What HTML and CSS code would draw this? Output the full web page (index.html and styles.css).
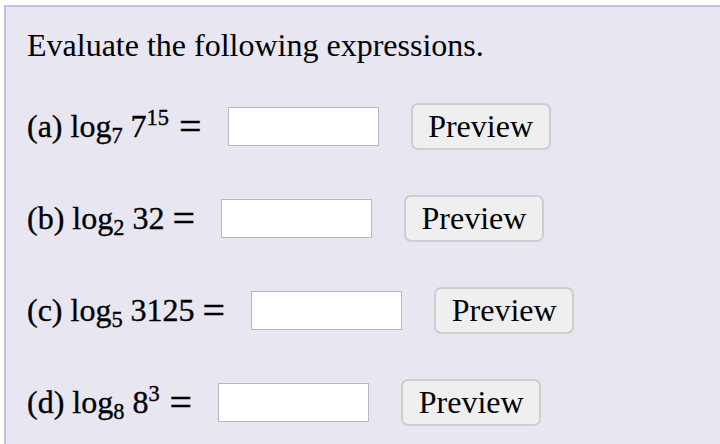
FILE: index.html
```html
<!DOCTYPE html>
<html lang="en">
<head>
    <meta charset="UTF-8">
    <meta name="viewport" content="width=device-width, initial-scale=1.0">
    <title>Logarithms</title>
    <link rel="stylesheet" href="styles.css">
</head>
<body>
    <div class="problem">
        <p class="intro">Evaluate the following expressions.</p>

        <div class="row">
            <span class="expr">(a) log<sub>7</sub> 7<sup>15</sup></span>
            <span class="eq">=</span>
            <input type="text" class="answer">
            <button class="preview">Preview</button>
        </div>
        <div class="row">
            <span class="expr">(b) log<sub>2</sub> 32</span>
            <span class="eq">=</span>
            <input type="text" class="answer">
            <button class="preview">Preview</button>
        </div>
        <div class="row">
            <span class="expr">(c) log<sub>5</sub> 3125</span>
            <span class="eq">=</span>
            <input type="text" class="answer">
            <button class="preview">Preview</button>
        </div>
        <div class="row">
            <span class="expr">(d) log<sub>8</sub> 8<sup>3</sup></span>
            <span class="eq">=</span>
            <input type="text" class="answer">
            <button class="preview">Preview</button>
        </div>
    </div>
</body>
</html>
```

FILE: styles.css
```css
body{
    margin: 0;
    background-color: #fff;
    font-family: "Liberation Serif", "Times New Roman", serif;
    color: #000;
}
.problem{
    margin: 5px 0 0 4px;
    padding: 20px 0 40px 21px;
    background-color: #e7e6f1;
    border-top: 2px solid #c2c1df;
    border-left: 2px solid #c2c1df;
}
.intro{
    margin: 0 0 17px 0;
    font-size: 32px;
    line-height: 36px;
}
.row{
    display: flex;
    align-items: center;
    height: 92px;
    font-size: 32px;
}
.expr{
    -webkit-text-stroke: 0.35px #000;
}
.expr sub,
.expr sup{
    font-size: 0.7em;
    line-height: 0;
}
.expr sub{
    vertical-align: -0.28em;
}
.expr sup{
    vertical-align: 0.5em;
    margin-right: 2px;
}
.eq{
    margin: 0 26px 0 8px;
    font-size: 40px;
    -webkit-text-stroke: 0.3px #000;
}
.answer{
    width: 151px;
    height: 39px;
    box-sizing: border-box;
    border: 1px solid #b9b9b9;
    background: #fff;
    margin: 0;
    padding: 0 6px;
    font-size: 20px;
}
.preview{
    margin-left: 32px;
    width: 140px;
    height: 47px;
    box-sizing: border-box;
    border: 2px solid #cecece;
    border-radius: 7px;
    background-color: #efefef;
    font-family: "Liberation Serif", "Times New Roman", serif;
    font-size: 32px;
    color: #000;
    padding: 0;
}
```
